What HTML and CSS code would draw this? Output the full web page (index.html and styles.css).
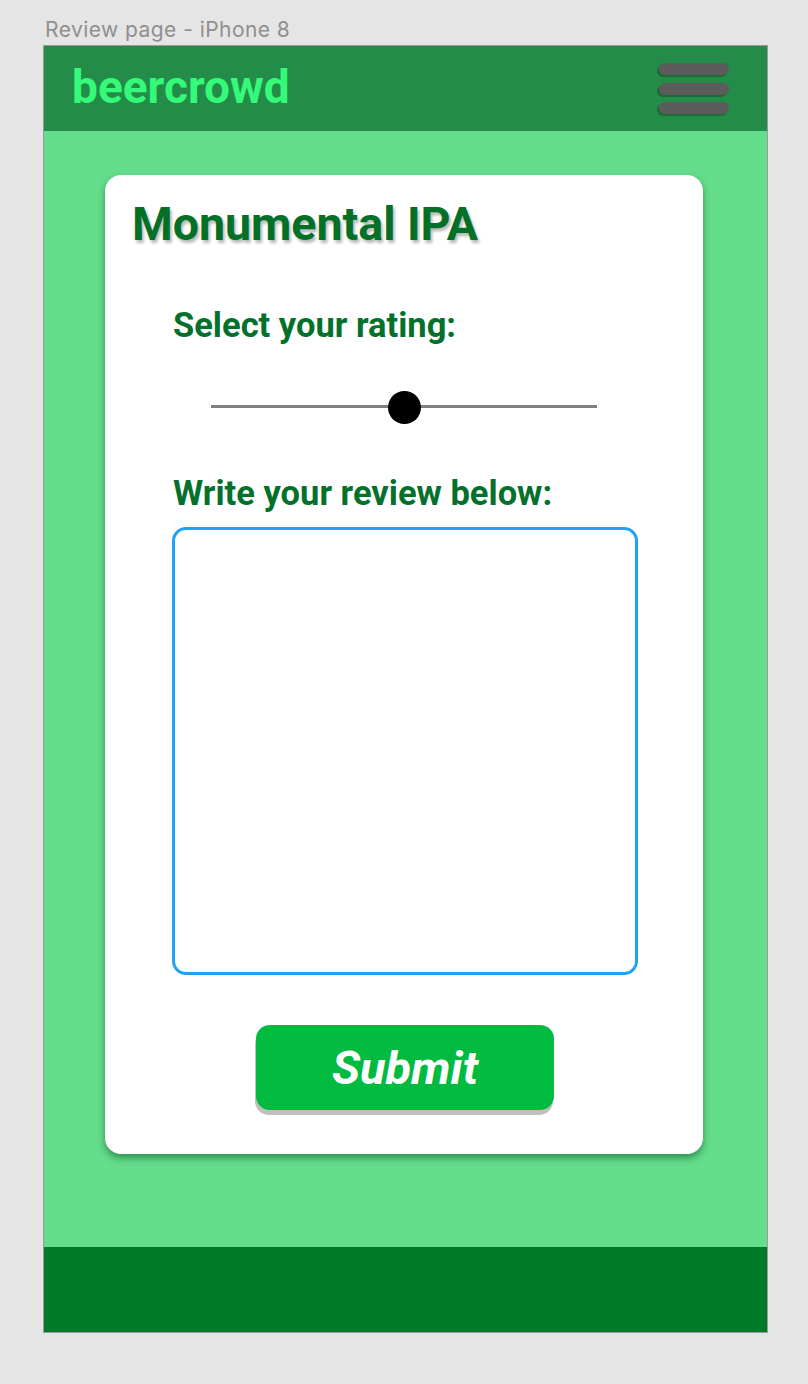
FILE: index.html
```html
<!DOCTYPE html>
<html lang="en">
<head>
<meta charset="utf-8">
<title>Review page - iPhone 8</title>
<link rel="stylesheet" href="styles.css">
</head>
<body>
<div class="caption">Review page - iPhone 8</div>
<div class="frame">
  <header class="topbar">
    <div class="logo">beercrowd</div>
    <div class="burger" aria-label="menu">
      <span class="bar"></span>
      <span class="bar"></span>
      <span class="bar"></span>
    </div>
  </header>
  <main class="main">
    <section class="card">
      <h1 class="title">Monumental IPA</h1>
      <div class="form">
        <label class="label rating-label">Select your rating:</label>
        <input class="slider" type="range" min="0" max="10" value="5">
        <label class="label review-label">Write your review below:</label>
        <textarea class="review"></textarea>
        <div class="actions">
          <button class="submit" type="button">Submit</button>
        </div>
      </div>
    </section>
  </main>
  <footer class="footer"></footer>
</div>
</body>
</html>
```

FILE: styles.css
```css
html, body {
  margin: 0;
  padding: 0;
}
body {
  background: #e5e5e5;
  font-family: Roboto, "Liberation Sans", sans-serif;
  height: 1384px;
}
.caption {
  font-family: Inter, "Liberation Sans", sans-serif;
  font-size: 21px;
  letter-spacing: 0.45px;
  line-height: 24px;
  color: #8f8f8f;
  padding: 18px 0 3px 45px;
  height: 24px;
}
.frame {
  margin-left: 43px;
  width: 723px;
  border: 1px solid #9a9a9a;
  display: flex;
  flex-direction: column;
}
.topbar {
  height: 85px;
  background: #238c48;
  display: flex;
  align-items: center;
  justify-content: space-between;
  padding: 0 38px 0 28px;
}
.logo {
  font-size: 46px;
  line-height: 46px;
  font-weight: 700;
  color: #35fa79;
  margin-bottom: 4px;
}
.burger {
  display: flex;
  flex-direction: column;
  gap: 7.5px;
  padding-left: 2px;
}
.bar {
  display: block;
  width: 70px;
  height: 12px;
  border-radius: 6px;
  background: #5c5c5c;
  box-shadow: -2px 2px 0 #1d6b36;
}
.main {
  height: 1116px;
  background: #64dd8c;
  padding: 44px 0 0 61px;
  box-sizing: border-box;
}
.card {
  width: 598px;
  height: 979px;
  box-sizing: border-box;
  background: #ffffff;
  border-radius: 16px;
  box-shadow: 0 4px 7px rgba(10, 80, 35, 0.55);
  padding: 26px 0 0 25px;
  display: flex;
  flex-direction: column;
}
.title {
  margin: 0 0 0 2px;
  font-size: 46.5px;
  line-height: 46px;
  font-weight: 700;
  color: #037028;
  text-shadow: 2px 3px 3px rgba(0, 0, 0, 0.28);
}
.form {
  display: flex;
  flex-direction: column;
  padding-left: 42px;
}
.label {
  font-size: 34.5px;
  line-height: 34px;
  font-weight: 700;
  color: #03702b;
  padding-left: 1px;
}
.rating-label {
  margin-top: 61px;
}
.slider {
  -webkit-appearance: none;
  appearance: none;
  width: 386px;
  height: 33px;
  margin: 48px 0 0 39px;
  padding: 0;
  background: transparent;
}
.slider::-webkit-slider-runnable-track {
  height: 3px;
  background: #808080;
  border: none;
}
.slider::-webkit-slider-thumb {
  -webkit-appearance: none;
  appearance: none;
  width: 33px;
  height: 33px;
  border-radius: 50%;
  background: #000000;
  border: none;
  margin-top: -14px;
}
.review-label {
  margin-top: 53px;
}
.review {
  margin-top: 17px;
  width: 466px;
  height: 448px;
  box-sizing: border-box;
  border: 3px solid #1fa3f8;
  border-radius: 14px;
  resize: none;
  outline: none;
  background: #ffffff;
}
.actions {
  display: flex;
  margin-top: 50px;
  padding-left: 84px;
}
.submit {
  width: 298px;
  height: 85px;
  border: none;
  border-radius: 14px;
  background: #00bb40;
  box-shadow: -1px 5px 0 #bfbfbf;
  color: #ffffff;
  font-family: Roboto, "Liberation Sans", sans-serif;
  font-size: 47px;
  font-weight: 700;
  font-style: italic;
  padding: 0;
}
.footer {
  height: 85px;
  background: #007a29;
}
```
